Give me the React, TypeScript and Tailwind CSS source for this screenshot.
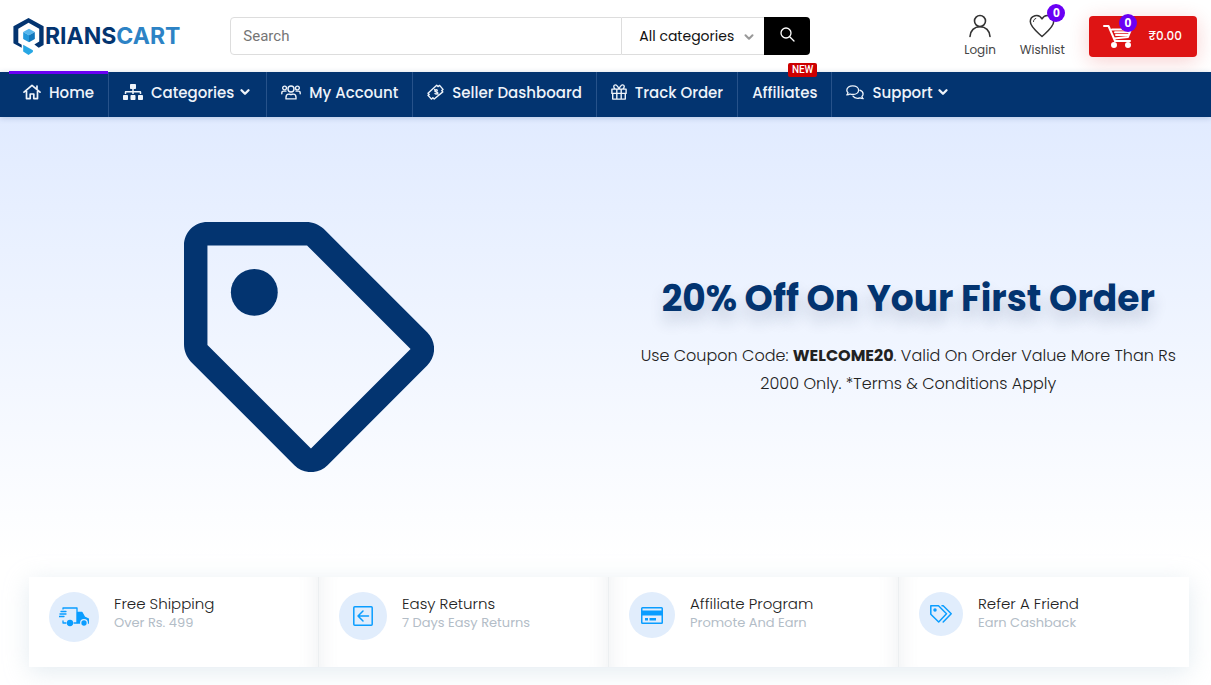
import React, { type ReactNode } from "react";
import { FaSitemap } from "react-icons/fa";
import { FiChevronDown } from "react-icons/fi";

const line = {
  fill: "none",
  stroke: "currentColor",
  strokeLinecap: "round" as const,
  strokeLinejoin: "round" as const,
};

function HomeIcon() {
  return (
    <svg width="18" height="16" viewBox="0 0 18 16" {...line} strokeWidth="1.7">
      <path d="M1 8.2 9 1.3l8 6.9M3.5 7v7.6h3.7V10h3.6v4.6h3.7V7M14 2v2.6" />
    </svg>
  );
}

function UsersIcon() {
  return (
    <svg width="20" height="15" viewBox="0 0 20 15" {...line} strokeWidth="1.4">
      <circle cx="10" cy="4" r="3" />
      <circle cx="3.6" cy="3" r="1.9" />
      <circle cx="16.4" cy="3" r="1.9" />
      <path d="M5 13.9v-1.7c0-2 1.2-3.1 2.8-3.1.8 0 1.2.4 2.2.4s1.4-.4 2.2-.4c1.6 0 2.8 1.1 2.8 3.1v1.7zM.8 8.7V8c0-1.2.8-1.9 1.8-1.9H5M19.2 8.7V8c0-1.2-.8-1.9-1.8-1.9H15" />
    </svg>
  );
}

function MoneyIcon() {
  return (
    <svg width="17" height="16" viewBox="0 0 17 16" {...line} strokeWidth="1.4">
      <path d="M1 9.2 9.7 1.3 11 2.600l1.600-1.200L16 5.400l-1.200 1.200 1 1.300L7.200 15l-1.300-1.200-1.500 1.300L1 11.300l1.200-.9z" />
      <path d="M10.3 6.2c-1-.9-2.900 0-2.300 1.200.6 1 2.400 0 2.700 1.200.3 1.200-1.600 1.900-2.700.9M7.700 5.500l3.300 4.700" />
    </svg>
  );
}

function GiftIcon() {
  return (
    <svg width="16" height="16" viewBox="0 0 16 16" {...line} strokeWidth="1.4">
      <path d="M.9 5.100h14.200v4.300H.9zM1.700 9.400h12.600v5.700H1.700zM5.800 5.100v10M10.200 5.100v10M8 5C6.800 2.200 5.500.8 4.200.9c-1.900.2-2 3 .1 4.100M8 5c1.200-2.800 2.500-4.200 3.800-4.100 1.900.2 2 3-.1 4.100" />
    </svg>
  );
}

function ChatIcon() {
  return (
    <svg width="18" height="15" viewBox="0 0 18 15" {...line} strokeWidth="1.3">
      <path d="M6.700.8c3.300 0 5.900 1.900 5.900 4.400S10 9.500 6.700 9.500c-1 0-1.900-.2-2.700-.5-.9.6-1.900.9-3.200.9.7-.7 1.100-1.400 1.200-2.200C1.200 6.900.8 6 .8 5.200.8 2.700 3.400.8 6.700.8z" />
      <path d="M7 11.2c.8 1.300 2.500 2.100 4.400 2.100.9 0 1.800-.2 2.500-.5.9.6 1.900.9 3.300.9-.7-.7-1.200-1.500-1.300-2.200.8-.7 1.200-1.500 1.200-2.400 0-1.700-1.300-3.200-3.300-3.900" />
    </svg>
  );
}

function Logo() {
  return (
    <a href="#" aria-label="Orianscart" className="flex shrink-0 items-center">
      <svg width="32" height="37" viewBox="0 0 32 38">
        <path fill="#033470" d="M15.500 0 31 8.500v19.200L26 30.500l-4.500-3.300 5-3V11L15.500 5 5 11v14.500l3.500 2v3L0 26V8.500z" />
        <path fill="#56b6ed" d="m16 11 6 3.300-6 3.400-6-3.400z" />
        <path fill="#2499dc" d="M10 14.300 16 17.700v7.300l-6-3.500z" />
        <path fill="#1278bd" d="m22 14.300-6 3.400V25l6-3.500z" />
        <path fill="#27a7e4" d="m10 27.500 10 5.500v2l-4.500 3-5.500-3.500z" />
      </svg>
      <span className="font-['Inter',sans-serif] text-[23px] font-bold leading-9 text-[#033470]">
        RIANS<span className="text-[#2d83c5]">CART</span>
      </span>
    </a>
  );
}

function Count() {
  return (
    <span className="absolute -right-1 -top-2.5 flex size-[18px] items-center justify-center rounded-full bg-[#6a00f4] font-['Open_Sans',sans-serif] text-xs font-bold text-white">
      0
    </span>
  );
}

function Header() {
  return (
    <header className="flex h-18 items-center bg-white pl-[13px] pr-3.5">
      <Logo />
      <form className="ml-[50px] flex h-[38px] w-[580px] shrink" onSubmit={(e) => e.preventDefault()}>
        <input
          type="search"
          aria-label="Search"
          placeholder="Search"
          className="min-w-0 flex-1 rounded-l border border-[#dddddd] px-3 font-['Roboto',sans-serif] text-[15px] placeholder:text-[#757575]"
        />
        <span className="relative flex border-y border-[#dddddd]">
          <select
            aria-label="Category"
            className="w-[142px] appearance-none bg-white pl-[17px] text-sm text-[#111111]"
          >
            <option>All categories</option>
          </select>
          <FiChevronDown className="pointer-events-none absolute right-2 top-3 size-3.5 text-[#999999]" strokeWidth={3.5} />
        </span>
        <button aria-label="Submit search" className="flex w-[46px] items-center justify-center rounded-r bg-black pb-1 text-white">
          <svg width="15" height="15" viewBox="0 0 15 15" {...line} strokeWidth="1.3">
            <circle cx="6" cy="6" r="5" />
            <path d="m9.700 9.700 4.300 4.300" />
          </svg>
        </button>
      </form>
      <div className="ml-auto flex items-center text-xs text-[#444444]">
        <a href="#" className="flex flex-col items-center gap-1">
          <svg width="22" height="24" viewBox="0 0 22 24" {...line} stroke="#333333" strokeWidth="1.6">
            <circle cx="11" cy="7" r="5.5" />
            <path d="M1 22.500c.3-5.800 4.300-9.800 10-9.800s9.700 4 10 9.800" />
          </svg>
          Login
        </a>
        <a href="#" className="ml-6 flex flex-col items-center gap-1">
          <span className="relative px-1.5">
            <svg width="26" height="24" viewBox="0 0 26 24" {...line} stroke="#333333" strokeWidth="1.5">
              <path d="M13 22.500C9 18.600 1.300 13.200 1.300 7.600c0-6.300 8.500-8.600 11.700-2.700 3.200-5.900 11.700-3.600 11.700 2.700 0 5.600-7.700 11-11.700 14.900z" />
              <path d="M4.500 7.500c0-1.600.9-2.600 2.300-3" strokeWidth="1" />
            </svg>
            <Count />
          </span>
          Wishlist
        </a>
        <a
          href="#"
          aria-label="Cart"
          className="ml-6 flex h-[41px] w-[108px] items-center justify-between rounded bg-[#de1414] pl-3.5 pr-[15px] font-medium text-white shadow-[0_4px_20px_rgba(222,20,20,0.2)]"
        >
          <span className="relative">
            <svg width="30" height="24" viewBox="0 0 30 24" {...line} strokeWidth="2">
              <path d="M1 2h4.500L12 17h15M9 5.500h19L25 13l-14 1.500M12 8.200h14M13 11h12" />
              <circle cx="11" cy="21" r="2" fill="currentColor" />
              <circle cx="25" cy="21" r="2" fill="currentColor" />
            </svg>
            <Count />
          </span>
          ₹0.00
        </a>
      </div>
    </header>
  );
}

type NavItem = { label: string; icon?: ReactNode; menu?: boolean; active?: boolean; badge?: string };

const navItems: NavItem[] = [
  { label: "Home", icon: <HomeIcon />, active: true },
  { label: "Categories", icon: <FaSitemap className="size-5" />, menu: true },
  { label: "My Account", icon: <UsersIcon /> },
  { label: "Seller Dashboard", icon: <MoneyIcon /> },
  { label: "Track Order", icon: <GiftIcon /> },
  { label: "Affiliates", badge: "NEW" },
  { label: "Support", icon: <ChatIcon />, menu: true },
];

function Nav() {
  return (
    <nav className="relative flex h-[45px] bg-[#033470] pl-[9px] text-[15px] font-medium text-[#eef3fa] shadow-[0_1px_6px_rgba(3,52,112,0.2)]">
      {navItems.map((item) => (
        <a
          key={item.label}
          href="#"
          className="relative flex items-start gap-2 whitespace-nowrap border-r border-[#27528a] px-3.5 pt-2.5 leading-[22px] last:border-r-0"
        >
          {item.active && <span className="absolute inset-x-0 -top-px h-[3px] bg-[#6a00f4]" />}
          {item.icon && <span className="flex h-5 items-center">{item.icon}</span>}
          {item.label}
          {item.menu && <FiChevronDown className="-ml-1 mt-[3px] size-3.5" strokeWidth={4} />}
          {item.badge && (
            <span className="absolute -top-[9px] right-3.5 rounded-xs bg-[#cc0000] px-1 font-['Roboto',sans-serif] text-[10px] font-medium leading-[14px] text-white">
              {item.badge}
            </span>
          )}
        </a>
      ))}
    </nav>
  );
}

function Hero() {
  return (
    <section className="grid h-[443px] grid-cols-2 items-center bg-linear-to-b from-[#e1ebff] to-white">
      <svg className="ml-[184px] mt-[17px]" width="250" height="250" viewBox="0 0 512 512" fill="#033470">
        <path
          fillRule="evenodd"
          d="M48 0h202c14 0 26 5 36 14l212 212c19 19 19 49 0 68L294 498c-19 19-49 19-68 0L14 286C5 276 0 264 0 250V48C0 21 21 0 48 0zM48 48v204l212 212L464 260 252 48z"
        />
        <circle cx="144" cy="144" r="48" />
      </svg>
      <div className="px-[31px] pb-2 text-center text-[#333333]">
        <h1 className="whitespace-nowrap text-4xl font-bold leading-[54px] text-[#033470] [text-shadow:0_10px_15px_rgba(30,50,80,0.2)]">
          20% Off On Your First Order
        </h1>
        <p className="mt-4 text-base font-light leading-7 text-[#222222]">
          Use Coupon Code: <b className="font-bold">WELCOME20</b>. Valid On Order Value More Than Rs 2000 Only. *Terms
          &amp; Conditions Apply
        </p>
      </div>
    </section>
  );
}

const features = [
  {
    title: "Free Shipping",
    text: "Over Rs. 499",
    circle: "size-[50px]",
    icon: (
      <svg width="30" height="20" viewBox="0 0 30 20" {...line} strokeWidth="1.3">
        <path d="M4 2V1h14v15h-3M4 14v2h3M2 4.500h5M1 7h6M0 9.500h5" />
        <path fill="currentColor" d="M18.500 5.500h4.500l2.500 4.500 4 2v4h-11z" />
        <circle cx="11" cy="16" r="2.5" fill="currentColor" />
        <circle cx="25" cy="16" r="3.3" fill="currentColor" stroke="#e1edfc" />
      </svg>
    ),
  },
  {
    title: "Easy Returns",
    text: "7 Days Easy Returns",
    circle: "size-12",
    icon: (
      <svg width="20" height="20" viewBox="0 0 20 20" {...line} strokeWidth="1.5">
        <rect x=".8" y=".8" width="18.4" height="18.4" rx="1" />
        <path d="M15.500 10H5M10 5l-5 5 5 5" />
      </svg>
    ),
  },
  {
    title: "Affiliate Program",
    text: "Promote And Earn",
    circle: "size-[46px]",
    icon: (
      <svg width="22" height="17" viewBox="0 0 22 17" fill="currentColor">
        <path
          fillRule="evenodd"
          d="M1.500 0h19A1.500 1.500 0 0 1 22 1.500v14a1.500 1.500 0 0 1-1.500 1.500h-19A1.500 1.500 0 0 1 0 15.500v-14A1.500 1.500 0 0 1 1.500 0zM1.500 1.500v2h19v-2zM1.500 8.500v7h19v-7z"
        />
        <path d="M4 11h3v2.500H4zM8.500 11H15v2.500H8.500z" />
      </svg>
    ),
  },
  {
    title: "Refer A Friend",
    text: "Earn Cashback",
    circle: "size-11",
    icon: (
      <svg width="22" height="18" viewBox="0 0 22 18" {...line} strokeWidth="1.5">
        <path d="M.8.800h7.700l8 8-7.800 8.200L.8 9.200zM12 .800h1.200l8 8-8 8.200" />
        <circle cx="5" cy="5" r="1" fill="currentColor" />
      </svg>
    ),
  },
];

function Features() {
  return (
    <section className="ml-[29px] mr-[22px] mt-[17px] grid grid-cols-4 bg-white shadow-[0_5px_23px_rgba(188,207,219,0.4)]">
      {features.map((f) => (
        <article
          key={f.title}
          className="flex h-[90px] items-start border-r border-[#eceff1] pl-5 pt-[15px] shadow-[inset_20px_0_18px_-18px_rgba(120,140,160,0.12),inset_-20px_0_18px_-18px_rgba(120,140,160,0.12)] first:shadow-[inset_-20px_0_18px_-18px_rgba(120,140,160,0.12)] last:border-r-0 last:shadow-[inset_20px_0_18px_-18px_rgba(120,140,160,0.12)]"
        >
          <span className={`flex shrink-0 items-center justify-center rounded-full bg-[#e1edfc] text-[#0a9dff] ${f.circle}`}>
            {f.icon}
          </span>
          <div className="ml-[15px]">
            <h2 className="text-[15px] font-light leading-6 text-[#222222]">{f.title}</h2>
            <p className="text-[13px] leading-[14px] text-[#b3bdc7]">{f.text}</p>
          </div>
        </article>
      ))}
    </section>
  );
}

export default function App() {
  return (
    <main className="min-h-screen overflow-hidden bg-white font-['Poppins','Inter',sans-serif]">
      <Header />
      <Nav />
      <Hero />
      <Features />
    </main>
  );
}
